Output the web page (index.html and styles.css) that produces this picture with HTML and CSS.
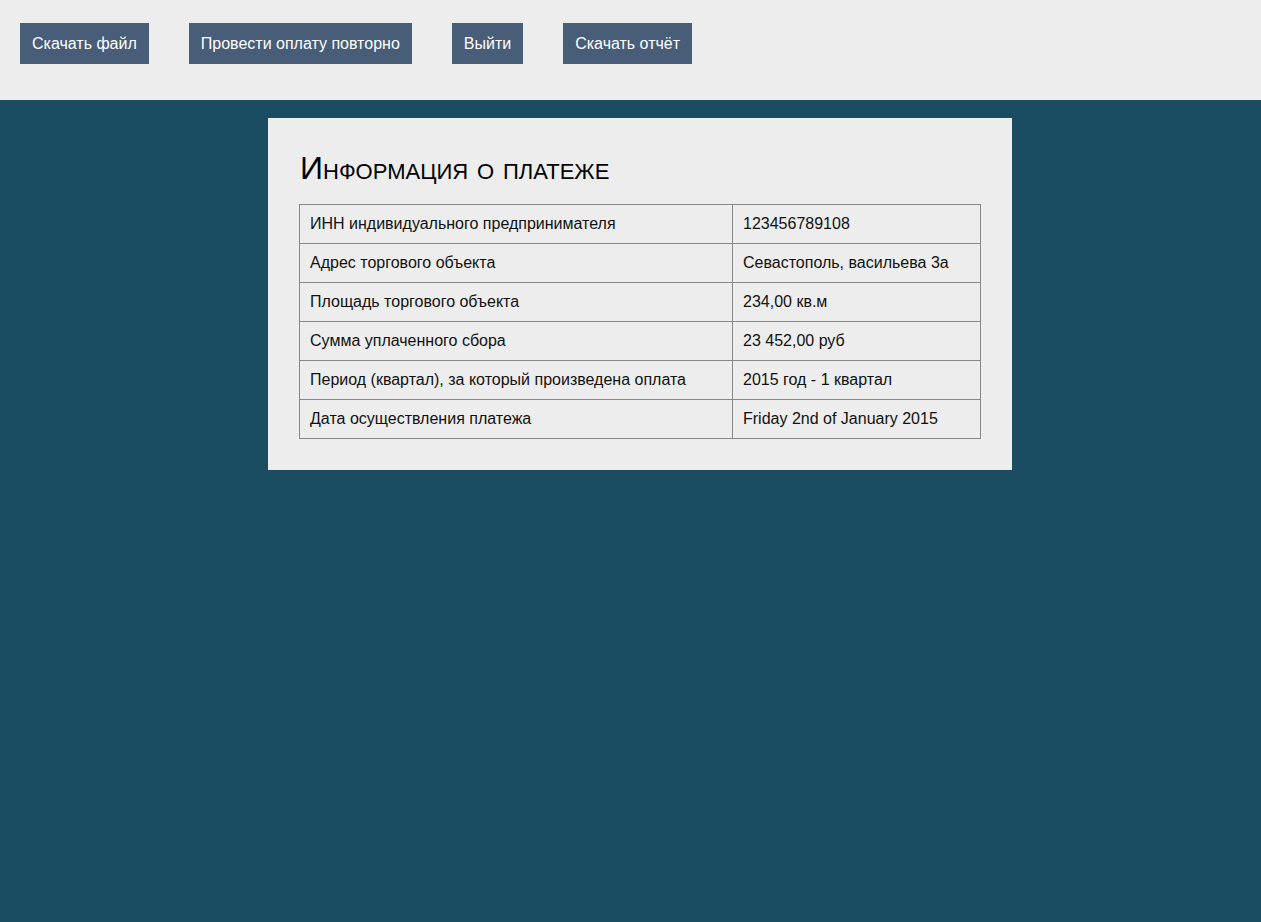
FILE: index.html
```html
<!DOCTYPE html>
<html lang="ru">
<head>
<meta charset="utf-8">
<title>Информация о платеже</title>
<link rel="stylesheet" href="styles.css">
</head>
<body>
<header class="topbar">
  <a class="btn" href="#">Скачать файл</a>
  <a class="btn" href="#">Провести оплату повторно</a>
  <a class="btn" href="#">Выйти</a>
  <a class="btn" href="#">Скачать отчёт</a>
</header>
<main class="main">
  <section class="card">
    <h1 class="title">Информация о платеже</h1>
    <table class="info">
      <tr><td class="label">ИНН индивидуального предпринимателя</td><td>123456789108</td></tr>
      <tr><td class="label">Адрес торгового объекта</td><td>Севастополь, васильева 3а</td></tr>
      <tr><td class="label">Площадь торгового объекта</td><td>234,00 кв.м</td></tr>
      <tr><td class="label">Сумма уплаченного сбора</td><td>23 452,00 руб</td></tr>
      <tr><td class="label">Период (квартал), за который произведена оплата</td><td>2015 год - 1 квартал</td></tr>
      <tr><td class="label">Дата осуществления платежа</td><td>Friday 2nd of January 2015</td></tr>
    </table>
  </section>
</main>
</body>
</html>
```

FILE: styles.css
```css
html, body {
  margin: 0;
  padding: 0;
  height: 100%;
}
body {
  font-family: "Liberation Sans", Arial, sans-serif;
  font-size: 16px;
  background: #1a4d62;
  color: #111;
}
.topbar {
  background: #ededed;
  height: 100px;
  box-sizing: border-box;
  padding: 23px 20px 0;
  display: flex;
  align-items: flex-start;
  gap: 40px;
}
.btn {
  display: block;
  background: #475d78;
  color: #fff;
  text-decoration: none;
  height: 41px;
  line-height: 41px;
  padding: 0 12px;
  font-size: 16px;
}
.main {
  padding: 18px 0 0 19px;
  display: flex;
  justify-content: center;
}
.card {
  width: 744px;
  box-sizing: border-box;
  background: #ededed;
  padding: 31px;
}
.title {
  margin: 0 0 17px 1px;
  font-weight: normal;
  font-variant: small-caps;
  font-size: 32px;
  line-height: 38px;
  color: #000;
}
.info {
  width: 682px;
  border-collapse: collapse;
}
.info td {
  border: 1px solid #888;
  height: 39px;
  box-sizing: border-box;
  padding: 0 10px;
  color: #111;
}
.info td.label {
  width: 433px;
}
```
